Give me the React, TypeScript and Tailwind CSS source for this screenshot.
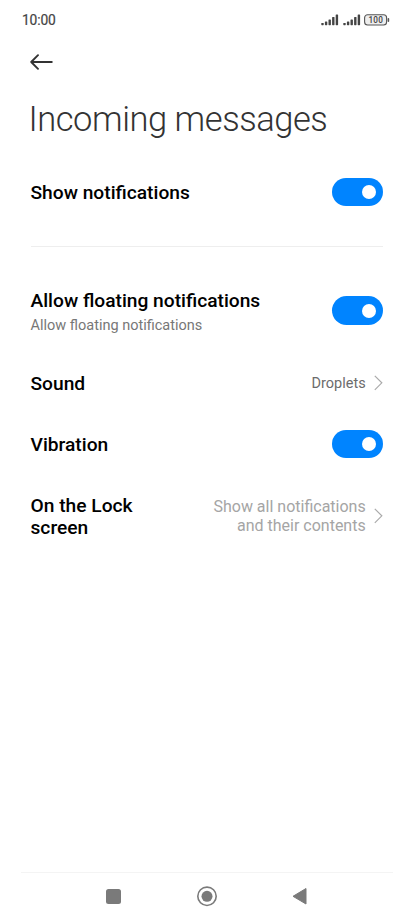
import React from 'react';

type ToggleProps = { label: string };

const Toggle: React.FC<ToggleProps> = ({ label }) => {
  return (
    <button role="switch" aria-checked="true" aria-label={label} className="flex h-[28.5px] w-[51.5px] shrink-0 items-center justify-end rounded-full bg-[#0084ff] pr-[7px]">
      <span className="size-[14px] rounded-full bg-white" />
    </button>
  );
};

const Chevron = () => (
  <svg width="10" height="16" viewBox="0 0 10 16" fill="none" className="shrink-0">
    <path d="M1.8 0.8L8.8 7.8L1.8 14.8" stroke="#aaa" strokeWidth="1.2" />
  </svg>
);

const Signal = () => (
  <svg width="18" height="12" viewBox="0 0 18 12" fill="#444" className="shrink-0">
    <rect x="0.3" y="9" width="2.4" height="2.2" rx=".6" />
    <rect x="3.9" y="7.5" width="2.4" height="3.7" rx=".6" />
    <rect x="7.5" y="5.5" width="2.4" height="5.7" rx=".6" />
    <rect x="11.1" y="3" width="2.4" height="8.2" rx=".6" />
    <rect x="14.7" y="0.5" width="2.4" height="10.7" rx=".6" />
  </svg>
);

const StatusBar = () => (
  <header className="flex h-10 items-center justify-between pl-[22px] pr-6 text-[#444]">
    <span className="text-[13.8px] leading-5 tracking-[-0.15px] [-webkit-text-stroke:0.2px_#444]">10:00</span>
    <div className="flex items-center">
      <Signal />
      <span className="w-[4px]" />
      <Signal />
      <svg width="26" height="12" viewBox="0 0 26 12" className="ml-[3px]">
        <rect x="0.6" y="0.8" width="22" height="10.2" rx="3" fill="#eee" stroke="#555" strokeWidth="1.1" />
        <rect x="23.6" y="4" width="1.6" height="4" rx=".8" fill="#555" />
        <text x="11.7" y="8.9" textAnchor="middle" fontSize="8.2" textLength="14.5" fontWeight="500" fill="#444">100</text>
      </svg>
    </div>
  </header>
);

export default function App() {
  return (
    <div className="flex h-[920px] w-[414px] flex-col bg-white font-['Roboto',sans-serif] text-black">
      <StatusBar />
      <button aria-label="Back" className="ml-[30px] mt-[13px] h-[18px] w-6">
        <svg width="24" height="18" viewBox="0 0 24 18" fill="none" stroke="#333" strokeWidth="1.9" strokeLinecap="round" strokeLinejoin="round">
          <path d="M8 2.2L1.2 9L8 15.8M1.2 9H21.8" />
        </svg>
      </button>
      <h1 className="ml-[28.5px] mt-[26px] text-[34.5px] font-light leading-[44px] tracking-[-0.45px] text-[#333]">Incoming messages</h1>
      <main className="pl-[30.5px] pr-[30.8px]">
        <div className="mt-[37px] flex h-7 items-center justify-between">
          <h2 className="pt-[2.5px] text-[19.2px] font-medium">Show notifications</h2>
          <Toggle label="Show notifications" />
        </div>
        <hr className="mt-[39.5px] border-[#eeeeee]" />
        <div className="mt-[42.5px] flex h-[43px] items-center justify-between">
          <div className="pt-[5px]">
            <h2 className="text-[19.2px] font-medium leading-[24px]">Allow floating notifications</h2>
            <p className="text-[14.5px] leading-[25px] text-[#777]">Allow floating notifications</p>
          </div>
          <Toggle label="Allow floating notifications" />
        </div>
        <div className="mt-[37px] flex h-7 items-center justify-between">
          <h2 className="pt-[2.5px] text-[19.2px] font-medium">Sound</h2>
          <div className="flex items-center gap-[7.5px] text-[14.5px] text-[#6c6c6c]">
            <span className="pt-px">Droplets</span>
            <Chevron />
          </div>
        </div>
        <div className="mt-[33px] flex h-7 items-center justify-between">
          <h2 className="pt-[2.5px] text-[19.2px] font-medium">Vibration</h2>
          <Toggle label="Vibration" />
        </div>
        <div className="mt-[36px] flex h-[44px] items-center justify-between">
          <h2 className="w-[120px] pt-[2px] text-[19.2px] font-medium leading-[22px]">On the Lock screen</h2>
          <div className="flex items-center gap-[7.5px] text-right text-[16px] leading-[19px] text-[#a5a5a5]">
            <p>Show all notifications<br />and their contents</p>
            <Chevron />
          </div>
        </div>
      </main>
      <nav className="mx-[21px] mt-auto flex h-12 items-center border-t border-[#f4f4f4]">
        <svg width="372" height="24" viewBox="0 0 372 24" fill="#7a7a7a">
          <rect x="85" y="4" width="15" height="15" rx="2.5" />
          <circle cx="186" cy="11.3" r="9.2" fill="none" stroke="#7a7a7a" strokeWidth="1.6" />
          <circle cx="186" cy="11.3" r="5.5" />
          <path d="M272 11.3L285 3.5V19Z" stroke="#7a7a7a" strokeWidth="1" strokeLinejoin="round" />
        </svg>
      </nav>
    </div>
  );
}
